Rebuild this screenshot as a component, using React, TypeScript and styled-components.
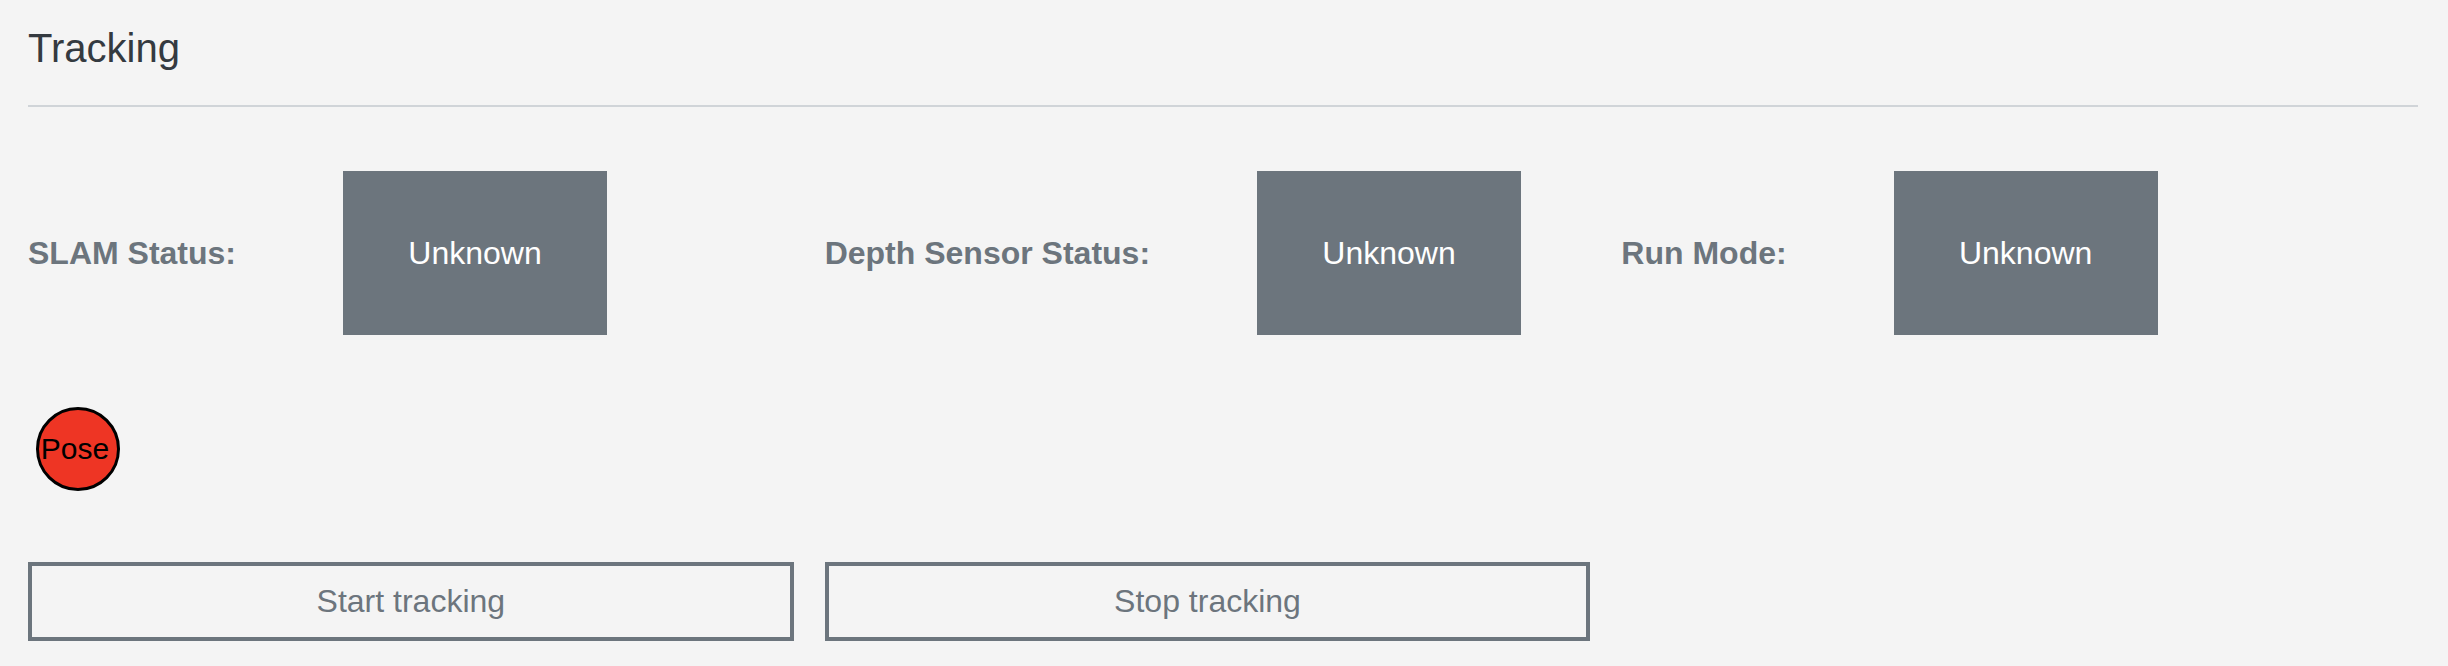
import React from "react";
import styled, { createGlobalStyle } from "styled-components";

const GlobalStyle = createGlobalStyle`
  html, body {
    margin: 0;
    padding: 0;
    background: #f4f4f4;
  }
  body {
    font-family: "Liberation Sans", Arial, Helvetica, sans-serif;
  }
  * { box-sizing: border-box; }
`;

const Page = styled.div`
  padding: 24px 30px 26px 28px;
  background: #f4f4f4;
`;

const Title = styled.h1`
  margin: 0 0 33px 0;
  font-size: 40px;
  line-height: 48px;
  font-weight: 400;
  color: #343a40;
`;

const Divider = styled.hr`
  margin: 0 0 64px 0;
  border: 0;
  height: 2px;
  background: #d0d4d8;
`;

const Grid = styled.div<{ $mb: number }>`
  display: grid;
  grid-template-columns: repeat(3, 1fr);
  margin-bottom: ${(p) => p.$mb}px;
`;

const Cell = styled.div`
  display: flex;
  align-items: center;
  padding-right: 31px;
  min-width: 0;
`;

const Label = styled.span`
  font-size: 32px;
  font-weight: 700;
  color: #6c757d;
  margin-right: 107px;
  white-space: nowrap;
`;

const StatusBox = styled.div`
  width: 264px;
  height: 164px;
  flex: none;
  background: #6c757d;
  color: #ffffff;
  font-size: 32px;
  display: flex;
  align-items: center;
  justify-content: center;
`;

const PoseRow = styled.div`
  display: flex;
  padding-left: 8px;
  margin-bottom: 71px;
`;

const PoseDot = styled.div<{ $color: string }>`
  width: 84px;
  height: 84px;
  border-radius: 50%;
  border: 3px solid #000;
  background: ${(p) => p.$color};
  color: #000;
  font-size: 30px;
  display: flex;
  align-items: center;
  justify-content: center;
  padding-right: 6px;
`;

const OutlineButton = styled.button`
  width: 100%;
  height: 79px;
  background: transparent;
  border: 4px solid #6c757d;
  border-radius: 0;
  color: #6c757d;
  font-family: "Liberation Sans", Arial, Helvetica, sans-serif;
  font-size: 32px;
  padding: 0;
  cursor: pointer;
`;

const statuses = [
  { label: "SLAM Status:", value: "Unknown" },
  { label: "Depth Sensor Status:", value: "Unknown" },
  { label: "Run Mode:", value: "Unknown" },
];

export default function App() {
  return (
    <>
      <GlobalStyle />
      <Page>
        <Title>Tracking</Title>
        <Divider />
        <Grid $mb={72}>
          {statuses.map((s) => (
            <Cell key={s.label}>
              <Label>{s.label}</Label>
              <StatusBox>{s.value}</StatusBox>
            </Cell>
          ))}
        </Grid>
        <PoseRow>
          <PoseDot $color="#ee3524">Pose</PoseDot>
        </PoseRow>
        <Grid $mb={0}>
          <Cell>
            <OutlineButton>Start tracking</OutlineButton>
          </Cell>
          <Cell>
            <OutlineButton>Stop tracking</OutlineButton>
          </Cell>
        </Grid>
      </Page>
    </>
  );
}
